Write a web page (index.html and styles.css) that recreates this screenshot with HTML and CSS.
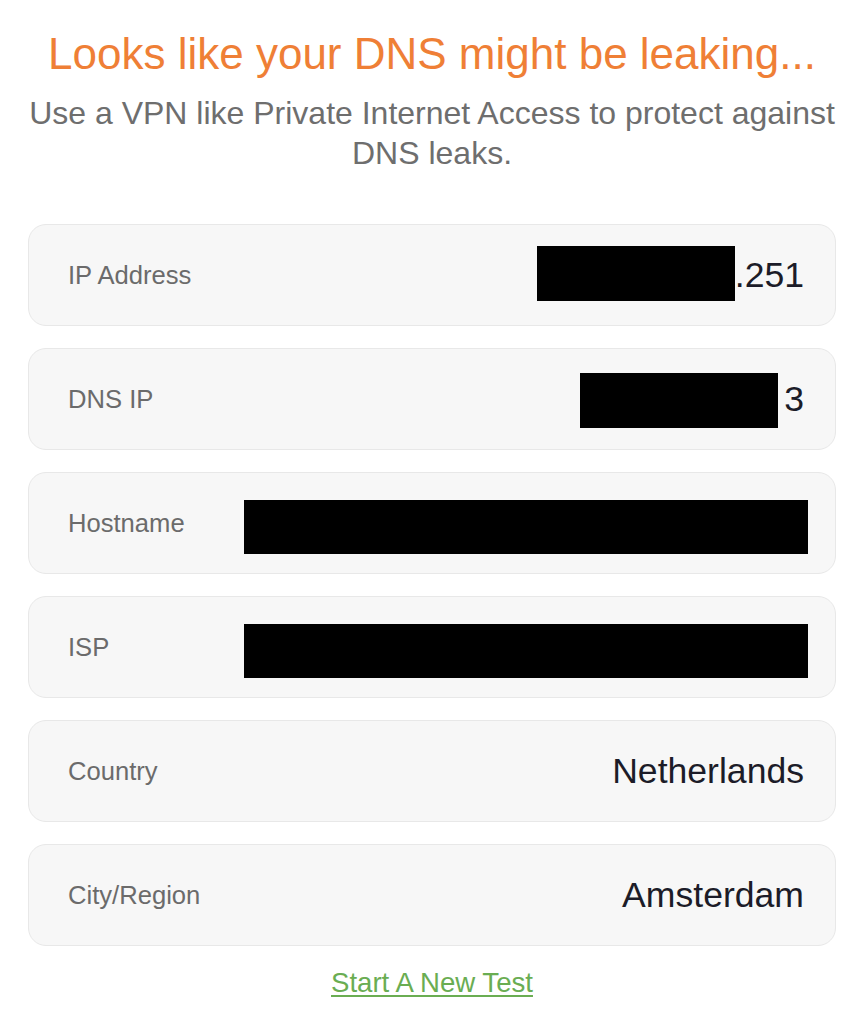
FILE: index.html
```html
<!DOCTYPE html>
<html lang="en">
<head>
<meta charset="utf-8">
<title>DNS Leak Test</title>
<link rel="stylesheet" href="styles.css">
</head>
<body>
<main class="page">
  <h1 class="title">Looks like your DNS might be leaking...</h1>
  <p class="subtitle">Use a VPN like Private Internet Access to protect against DNS leaks.</p>
  <section class="cards">
    <div class="card">
      <span class="label">IP Address</span>
      <span class="value"><span class="redact redact-ip"></span>.251</span>
    </div>
    <div class="card">
      <span class="label">DNS IP</span>
      <span class="value"><span class="redact redact-dns"></span>3</span>
    </div>
    <div class="card">
      <span class="label">Hostname</span>
      <span class="value"><span class="redact redact-wide"></span></span>
    </div>
    <div class="card">
      <span class="label">ISP</span>
      <span class="value"><span class="redact redact-wide"></span></span>
    </div>
    <div class="card">
      <span class="label">Country</span>
      <span class="value">Netherlands</span>
    </div>
    <div class="card">
      <span class="label">City/Region</span>
      <span class="value">Amsterdam</span>
    </div>
  </section>
  <div class="actions">
    <a class="new-test" href="#">Start A New Test</a>
  </div>
</main>
</body>
</html>
```

FILE: styles.css
```css
html, body {
  margin: 0;
  padding: 0;
  background: #ffffff;
}

body {
  font-family: "Liberation Sans", Arial, Helvetica, sans-serif;
}

.page {
  padding: 28px 30px 0 28px;
}

.title {
  margin: 0;
  font-size: 44px;
  line-height: 52px;
  font-weight: normal;
  color: #ef7f36;
  text-align: center;
}

.subtitle {
  margin: 13px 0 0;
  font-size: 32px;
  line-height: 40px;
  color: #6e6e6e;
  text-align: center;
}

.cards {
  margin-top: 51px;
  display: flex;
  flex-direction: column;
  gap: 22px;
}

.card {
  box-sizing: border-box;
  height: 102px;
  display: flex;
  align-items: center;
  justify-content: space-between;
  padding: 0 31px 0 39px;
  background: #f7f7f7;
  border: 1px solid #e8e8e8;
  border-radius: 18px;
}

.label {
  font-size: 25.6px;
  color: #6b6b6b;
  white-space: nowrap;
}

.value {
  display: flex;
  align-items: center;
  font-size: 35.6px;
  color: #1c1c28;
  white-space: nowrap;
}

.redact {
  display: inline-block;
  background: #000000;
}

.redact-ip {
  width: 198px;
  height: 55px;
  margin-top: -4px;
}

.redact-dns {
  width: 198px;
  height: 55px;
  margin-top: 2px;
  margin-right: 6px;
}

.redact-wide {
  width: 564px;
  height: 54px;
  margin-right: -4px;
  margin-top: 8px;
}

.actions {
  margin-top: 21px;
  text-align: center;
}

.new-test {
  font-size: 27.6px;
  line-height: 32px;
  color: #6aad52;
  text-decoration: underline;
  text-underline-offset: 3px;
}
```
